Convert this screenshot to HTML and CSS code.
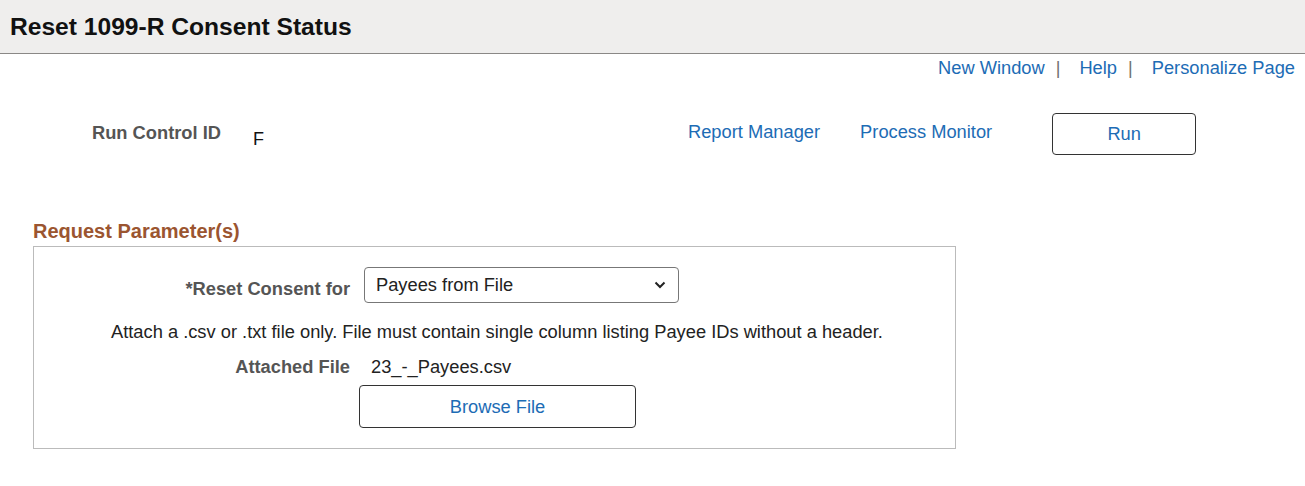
FILE: index.html
```html
<!DOCTYPE html>
<html>
<head>
<meta charset="utf-8">
<link rel="stylesheet" href="styles.css">
</head>
<body>
<header class="page-header">
  <h1 class="page-title">Reset 1099-R Consent Status</h1>
</header>
<nav class="top-links">
  <a class="link" href="#">New Window</a><span class="sep">|</span>
  <a class="link" href="#">Help</a><span class="sep">|</span>
  <a class="link" href="#">Personalize Page</a>
</nav>
<div class="run-row">
  <div class="run-left">
    <span class="label run-label">Run Control ID</span>
    <span class="run-value">F</span>
  </div>
  <a class="link" href="#">Report Manager</a>
  <a class="link monitor" href="#">Process Monitor</a>
  <button class="btn run-btn">Run</button>
</div>
<h2 class="section-title">Request Parameter(s)</h2>
<section class="param-box">
  <div class="field-row">
    <label class="label field-label consent-label">*Reset Consent for</label>
    <div class="select">
      <span>Payees from File</span>
      <svg class="chev" width="12" height="8" viewBox="0 0 12 8"><path d="M1.5 1.5 L6 6 L10.5 1.5" fill="none" stroke="#222" stroke-width="2"/></svg>
    </div>
  </div>
  <p class="note">Attach a .csv or .txt file only. File must contain single column listing Payee IDs without a header.</p>
  <div class="field-row attached">
    <span class="label field-label">Attached File</span>
    <span class="file-name">23_-_Payees.csv</span>
  </div>
  <div class="browse-row">
    <button class="btn browse-btn">Browse File</button>
  </div>
</section>
</body>
</html>
```

FILE: styles.css
```css
* { box-sizing: border-box; }
body {
  margin: 0;
  font-family: "Liberation Sans", Arial, sans-serif;
  color: #222;
  background: #fff;
}
.page-header {
  height: 54px;
  background: #efeeed;
  border-bottom: 1px solid #8a8886;
  display: flex;
  align-items: center;
  padding-left: 10px;
}
.page-title {
  margin: 0;
  font-size: 24.6px;
  font-weight: bold;
  color: #111;
  padding-top: 1px;
}
.top-links {
  display: flex;
  justify-content: flex-end;
  align-items: center;
  padding: 0 10px 0 0;
  height: 28px;
}
.link {
  color: #1d6cb5;
  text-decoration: none;
  font-size: 18.3px;
}
.sep {
  color: #6f6f6f;
  font-size: 18px;
  margin: 0 19px 0 11px;
}
.run-row {
  display: flex;
  align-items: center;
  margin-top: 31px;
  padding-left: 92px;
  height: 42px;
}
.run-left {
  width: 596px;
  display: flex;
  align-items: center;
}
.label {
  font-weight: bold;
  color: #555;
  font-size: 18.3px;
}
.run-label {
  padding-bottom: 2px;
}
.run-value {
  margin-left: 32px;
  font-size: 18px;
  color: #111;
  padding-top: 11px;
}
.run-row .link { padding-bottom: 4px; }
.monitor { margin-left: 40px; }
.btn {
  background: #fff;
  border: 1px solid #333;
  border-radius: 4px;
  font-family: "Liberation Sans", Arial, sans-serif;
  font-size: 18.3px;
  color: #1d6cb5;
  cursor: pointer;
}
.run-btn {
  margin-left: 60px;
  width: 144px;
  height: 42px;
}
.section-title {
  margin: 64px 0 0 33px;
  font-size: 20px;
  font-weight: bold;
  color: #9b5530;
  line-height: 24px;
}
.param-box {
  margin: 3px 0 0 33px;
  width: 923px;
  height: 203px;
  border: 1px solid #bbb;
  padding-top: 20px;
}
.field-row {
  display: flex;
  align-items: center;
}
.field-label {
  width: 316px;
  text-align: right;
}
.consent-label {
  padding-top: 8px;
}
.select {
  margin-left: 14px;
  width: 315px;
  height: 36px;
  border: 1px solid #777;
  border-radius: 4px;
  display: flex;
  align-items: center;
  justify-content: space-between;
  padding: 0 12px 0 11px;
  font-size: 18.3px;
  color: #222;
}
.note {
  margin: 18px 0 0 77px;
  font-size: 18.3px;
  line-height: 22px;
  color: #222;
}
.attached {
  margin-top: 13px;
  height: 22px;
}
.file-name {
  margin-left: 21px;
  font-size: 18.3px;
  color: #222;
}
.browse-row {
  margin-top: 7px;
  padding-left: 325px;
}
.browse-btn {
  width: 277px;
  height: 43px;
}
```
